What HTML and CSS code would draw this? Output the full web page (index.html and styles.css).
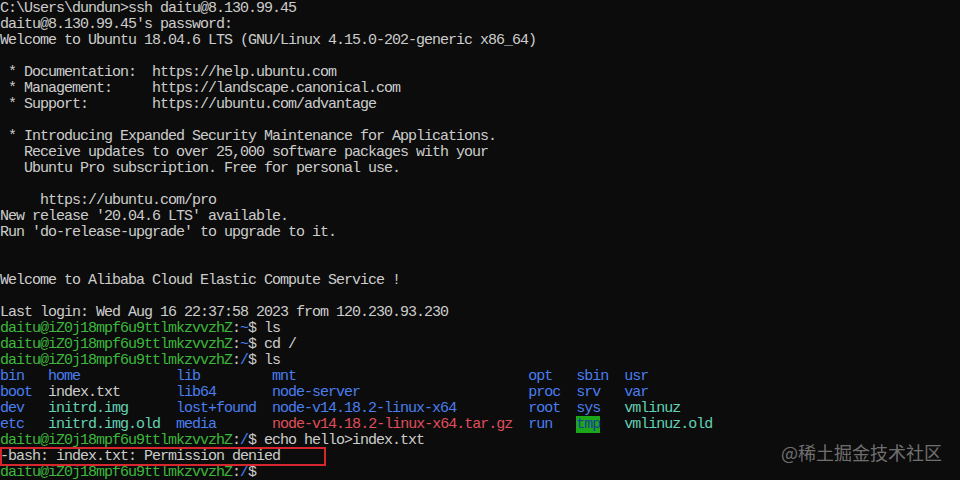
FILE: index.html
```html
<!DOCTYPE html>
<html>
<head>
<meta charset="utf-8">
<link rel="stylesheet" href="styles.css">
</head>
<body>
<div class="term">
<div class="ln">C:\Users\dundun&gt;ssh daitu@8.130.99.45</div>
<div class="ln">daitu@8.130.99.45's password:</div>
<div class="ln">Welcome to Ubuntu 18.04.6 LTS (GNU/Linux 4.15.0-202-generic x86_64)</div>
<div class="ln"> </div>
<div class="ln"> * Documentation:  https://help.ubuntu.com</div>
<div class="ln"> * Management:     https://landscape.canonical.com</div>
<div class="ln"> * Support:        https://ubuntu.com/advantage</div>
<div class="ln"> </div>
<div class="ln"> * Introducing Expanded Security Maintenance for Applications.</div>
<div class="ln">   Receive updates to over 25,000 software packages with your</div>
<div class="ln">   Ubuntu Pro subscription. Free for personal use.</div>
<div class="ln"> </div>
<div class="ln">     https://ubuntu.com/pro</div>
<div class="ln">New release '20.04.6 LTS' available.</div>
<div class="ln">Run 'do-release-upgrade' to upgrade to it.</div>
<div class="ln"> </div>
<div class="ln"> </div>
<div class="ln">Welcome to Alibaba Cloud Elastic Compute Service !</div>
<div class="ln"> </div>
<div class="ln">Last login: Wed Aug 16 22:37:58 2023 from 120.230.93.230</div>
<div class="ln"><span class="g">daitu@iZ0j18mpf6u9ttlmkzvvzhZ</span>:<span class="b">~</span>$ ls</div>
<div class="ln"><span class="g">daitu@iZ0j18mpf6u9ttlmkzvvzhZ</span>:<span class="b">~</span>$ cd /</div>
<div class="ln"><span class="g">daitu@iZ0j18mpf6u9ttlmkzvvzhZ</span>:<span class="b">/</span>$ ls</div>
<div class="ln"><span class="b">bin</span>   <span class="b">home</span>            <span class="b">lib</span>         <span class="b">mnt</span>                             <span class="b">opt</span>   <span class="b">sbin</span>  <span class="b">usr</span></div>
<div class="ln"><span class="b">boot</span>  index.txt       <span class="b">lib64</span>       <span class="b">node-server</span>                     <span class="b">proc</span>  <span class="b">srv</span>   <span class="b">var</span></div>
<div class="ln"><span class="b">dev</span>   <span class="c">initrd.img</span>      <span class="b">lost+found</span>  <span class="b">node-v14.18.2-linux-x64</span>         <span class="b">root</span>  <span class="b">sys</span>   <span class="c">vmlinuz</span></div>
<div class="ln"><span class="b">etc</span>   <span class="c">initrd.img.old</span>  <span class="b">media</span>       <span class="r">node-v14.18.2-linux-x64.tar.gz</span>  <span class="b">run</span>   <span class="tmp">tmp</span>   <span class="c">vmlinuz.old</span></div>
<div class="ln"><span class="g">daitu@iZ0j18mpf6u9ttlmkzvvzhZ</span>:<span class="b">/</span>$ echo hello&gt;index.txt</div>
<div class="ln mark">-bash: index.txt: Permission denied</div>
<div class="ln"><span class="g">daitu@iZ0j18mpf6u9ttlmkzvvzhZ</span>:<span class="b">/</span>$ </div>
</div>
<div class="wm">@稀土掘金技术社区</div>
</body>
</html>
```
FILE: styles.css
```css
html, body {
  margin: 0;
  padding: 0;
  background: #0c0c0c;
  width: 960px;
  height: 480px;
  overflow: hidden;
}
.term {
  font-family: "Liberation Mono", "DejaVu Sans Mono", monospace;
  font-size: 15px;
  letter-spacing: -1px;
  line-height: 16px;
  color: #cccccc;
  padding-top: 1px;
}
.ln {
  height: 16px;
  white-space: pre;
}
.g { color: #3cb83c; }
.b { color: #4a7ef0; }
.c { color: #63d2b4; }
.r { color: #e04e5c; }
.tmp {
  background: #1aa81a;
  color: #1d3a9a;
}
.mark {
  position: relative;
}
.mark::after {
  content: "";
  position: absolute;
  left: 0;
  top: -2px;
  width: 326px;
  height: 19px;
  border: 2px solid #d8262e;
  box-sizing: border-box;
}
.wm {
  position: absolute;
  left: 781px;
  top: 440px;
  font-family: "Noto Sans CJK SC", sans-serif;
  font-size: 18px;
  line-height: 24px;
  color: rgba(255, 255, 255, 0.42);
}
```
